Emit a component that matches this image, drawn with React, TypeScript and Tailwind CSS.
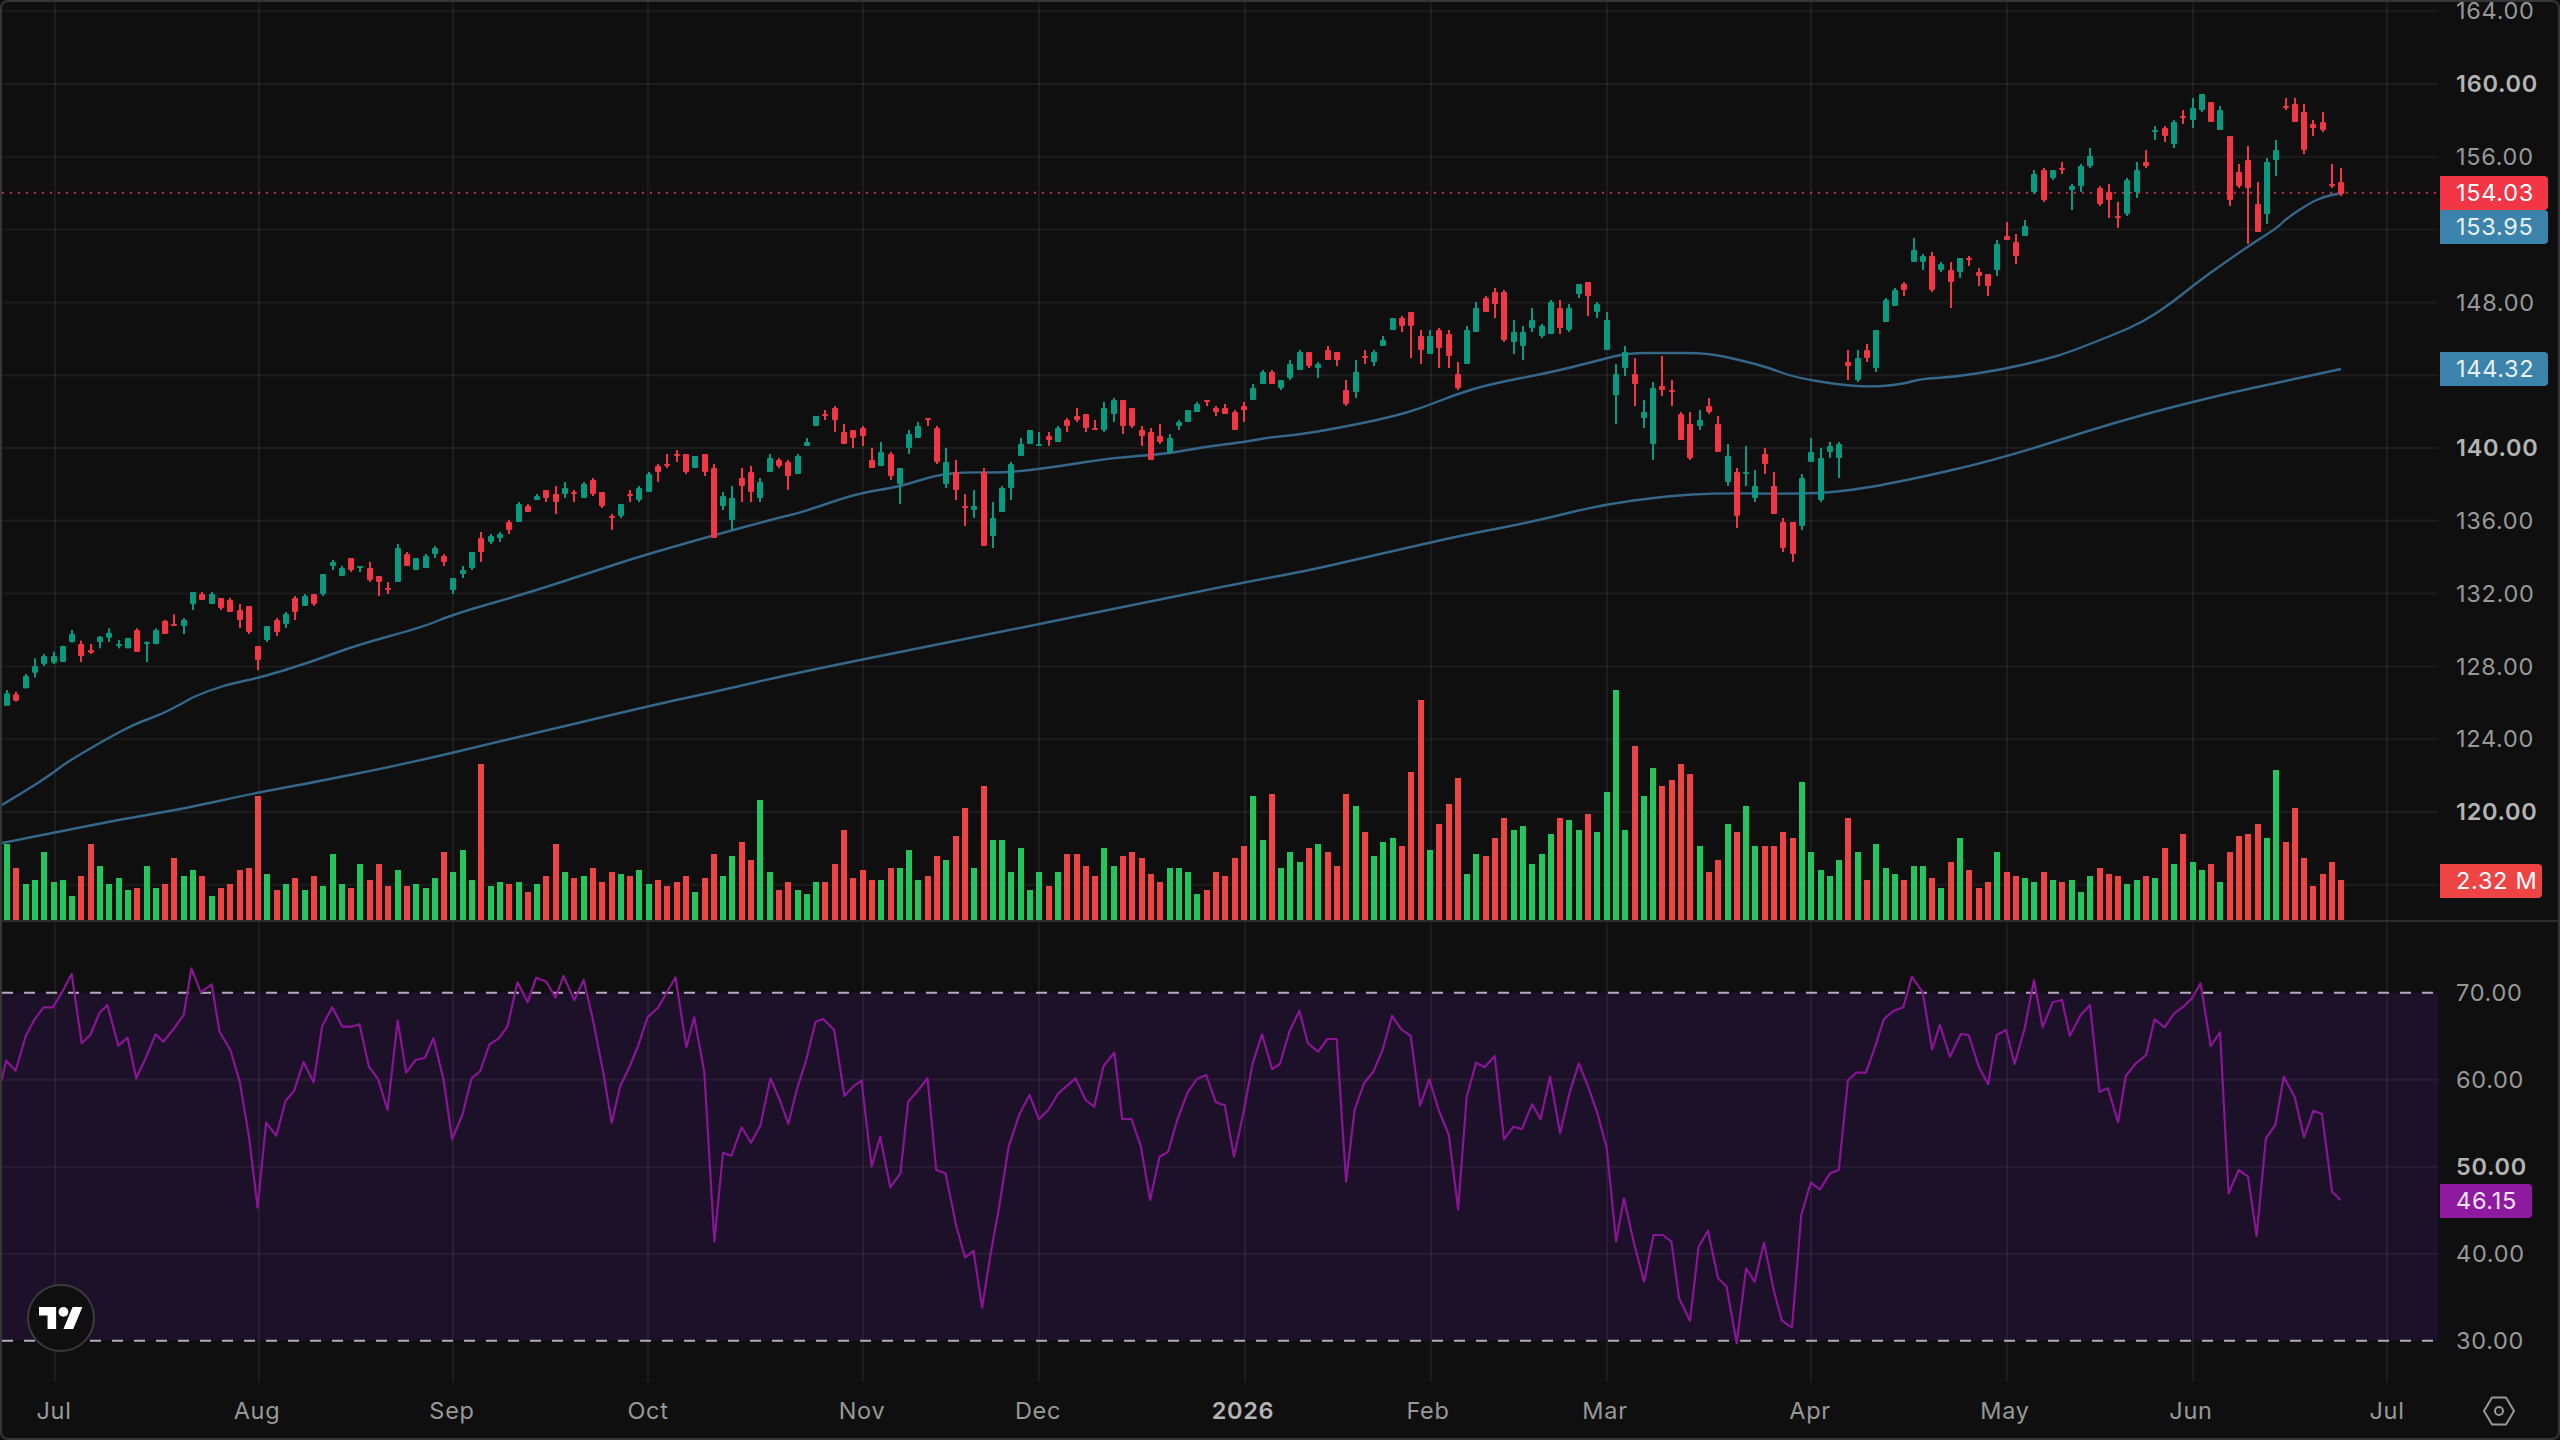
import React from "react";

type Bar = [number, number, number, number, number];

const segA: Bar[] = [
[1,930,940,977,977],[0,935,943,962,965],[1,882,888,925,925],[1,835,858,878,893],[1,822,828,852,858],[1,815,828,848,852],[1,797,798,846,846],[1,750,762,786,788],[0,782,792,828,846],[0,792,810,818,822],
[1,768,770,786,805],[1,745,758,773,786],[1,780,792,798,805],[1,774,774,805,805],[0,745,750,816,816],[1,784,786,792,846],[1,745,750,792,793],[0,720,722,762,762],[0,703,732,738,738],[1,714,720,738,762],
[1,636,636,672,690],[0,636,642,660,660],[1,636,642,672,672],[0,654,654,684,690],[0,654,660,696,696],[0,672,690,720,744],[0,678,678,756,762],[0,798,798,840,870],[1,738,738,780,786],[0,714,720,756,768],
[1,696,702,732,744],[0,648,654,696,720],[1,642,648,678,678],[0,642,642,672,678],[1,582,582,642,648],[1,540,546,558,570],[1,558,564,588,588],[0,534,534,570,576],[1,558,558,564,576],[0,546,564,600,606],
[0,588,588,606,648],[0,606,624,630,642],[1,492,504,606,606],[0,516,522,558,558],[1,534,534,570,570],[1,522,528,564,564],[1,498,504,522,534],[0,522,528,546,558],[1,594,594,630,642],[1,558,570,582,594],
[1,516,516,564,570],[0,456,474,516,546],[1,462,468,486,492],[1,456,462,474,486],[0,420,426,450,462],[1,366,372,426,426],[0,372,378,396,396],[1,342,348,360,360],[0,330,330,354,366],[0,318,342,366,402],
[1,306,324,342,354],[0,330,336,342,366],[1,306,312,354,354],[0,294,300,342,348],[0,336,336,378,384],[0,402,408,414,450],[1,372,372,408,414],[0,330,342,348,366],[1,318,324,360,366],[1,276,282,336,336],
[0,252,258,276,306],[0,222,252,258,264],[0,210,222,228,246],[0,222,222,276,282],[1,228,228,264,264],[0,222,222,276,288],[0,252,264,474,474],[1,336,348,378,390],[1,318,354,420,450],[0,264,294,318,366],
[0,258,276,336,366],[1,294,306,354,366],[1,222,234,276,276],[0,234,240,258,264],[0,240,246,288,330],[1,222,228,282,282],
];
const segB: Bar[] = [
[1,534,546,558,558],[1,468,468,498,498],[0,450,462,468,480],[0,438,444,480,516],[0,492,516,552,552],[0,510,510,534,564],[0,498,504,528,558],[0,564,600,624,624],[1,546,576,618,618],[0,576,582,648,660],
[1,624,624,672,732],[1,510,522,564,582],[1,486,498,534,534],[0,474,474,480,498],[0,498,504,606,612],[1,564,606,672,684],[0,600,636,690,720],[0,702,738,744,798],[1,690,738,750,774],[0,624,636,858,858],
[1,726,774,828,864],[1,678,684,756,756],[1,606,612,684,720],[1,534,552,588,588],[1,510,510,552,552],[1,516,552,558,558],[0,516,528,540,558],[1,498,504,546,546],[0,474,480,498,516],[0,444,468,480,486],
[0,462,462,504,516],[0,480,504,510,510],[1,426,444,510,516],[1,414,420,462,486],[0,420,420,498,522],[0,444,444,498,504],[0,498,510,528,558],[0,504,516,600,600],[0,492,528,546,552],[1,522,534,576,582],
[1,480,486,498,510],[1,450,450,486,486],[1,426,432,456,456],[0,420,420,426,438],[0,438,444,456,468],[0,432,444,462,462],[0,450,456,510,510],[0,426,438,450,486],[1,372,384,420,420],[1,330,336,372,372],
[0,330,336,372,372],[1,360,360,384,390],[1,300,312,354,360],[1,270,276,330,330],[0,276,276,318,324],[1,306,312,324,354],[0,258,270,300,300],[0,276,276,300,318],[0,360,390,432,438],[1,300,336,396,414],
[0,270,288,294,312],[1,270,276,306,318],[1,228,240,258,258],[1,174,174,210,210],[0,168,174,198,216],[0,156,156,198,294],[0,210,228,270,312],[1,210,228,282,282],[0,204,210,264,324],[0,210,222,288,324],
[0,306,342,384,390],[1,198,210,312,312],[1,126,144,216,216],[0,108,114,156,156],[0,84,96,132,174],[0,90,96,240,246],[1,180,216,246,282],[1,198,216,258,300],[1,144,180,204,216],[1,192,198,228,234],
[1,120,126,222,222],[0,120,144,204,222],[1,132,144,210,216],[1,72,72,102,114],[0,66,66,108,168],[1,126,132,156,174],[1,156,180,270,270],
];
const segC: Bar[] = [
[1,492,522,586,672],[1,438,456,504,528],[0,474,522,552,618],[1,600,636,654,684],[1,546,564,732,780],[0,468,558,570,588],[0,540,570,576,618],[0,636,642,720,720],[0,636,672,774,780],[1,630,660,678,690],
[0,594,618,636,642],[0,648,672,756,756],[1,732,768,846,858],[0,804,816,948,984],[1,738,816,822,858],[1,810,858,894,906],[0,744,762,792,822],[0,816,858,942,942],[0,954,966,1044,1056],[0,966,966,1062,1086],
[1,822,834,978,990],[1,714,756,786,786],[1,744,774,900,906],[1,726,738,756,774],[1,726,732,774,834],[0,450,486,498,540],[1,450,474,540,546],[0,432,450,474,486],[1,390,390,504,516],[1,294,300,366,366],
[1,264,270,318,318],[0,246,252,270,288],[1,114,150,186,186],[1,162,168,186,210],[0,156,168,270,276],[1,186,192,210,216],[0,186,210,246,324],[1,174,174,216,234],[0,168,174,180,198],[0,204,216,228,258],
[0,222,222,258,288],[1,120,132,210,228],
];
const segD: Bar[] = [
[0,486,528,540,540],[0,522,546,588,612],[1,480,498,528,528],[1,330,342,396,402],[0,324,330,420,426],[1,330,330,354,360],[0,306,324,330,342],[1,372,378,390,450],[1,312,318,378,396],[1,264,288,318,324],
[0,378,384,432,438],[0,372,396,420,474],[0,426,468,474,504],[1,354,360,462,468],[1,306,330,396,414],[0,270,306,318,324],[1,198,210,216,240],[0,198,204,228,246],[1,180,186,252,264],[0,150,168,174,192],
[1,114,144,180,204],[1,102,102,150,156],[0,126,126,186,186],[1,138,150,210,210],[0,228,228,420,438],[0,312,336,378,384],[0,258,300,384,552],[0,366,432,516,516],[1,294,306,462,492],[1,240,270,300,348],
[0,114,138,144,150],[0,114,132,186,186],[0,132,156,270,282],[0,180,192,204,228],[0,156,186,210,216],[0,312,372,378,384],[0,324,366,402,408],
];

const toPx = (seg: Bar[], origin: number) =>
  seg.map(([c, a, b, d, e]) => ({
    up: c === 1,
    wt: origin + a / 3,
    bt: origin + b / 3,
    bb: origin + d / 3,
    wb: origin + e / 3,
  }));

const candles = [...toPx(segA, 380), ...toPx(segB, 260), ...toPx(segC, 200), ...toPx(segD, 60)];

const volumeTops = [
492,564,612,600,516,606,600,648,588,492,558,612,594,630,624,558,624,612,534,588,570,588,648,624,612,570,564,348,582,630,612,594,630,588,618,522,612,624,552,600,552,618,570,
618,612,624,594,516,576,510,600,252,618,606,612,606,636,612,588,492,576,594,588,564,606,576,582,588,570,612,600,618,606,588,636,594,522,588,528,486,540,360,576,630,606,630,642,606,606,552,450,594,570,600,600,564,564,510,600,588,528,540,468,384,564,318,480,480,576,504,630,576,618,576,522,522,558,588,504,558,528,516,534,582,606,564,564,576,642,630,576,588,534,498,348,480,342,564,516,546,504,492,516,558,342,378,456,528,486,474,498,276,60,510,432,372,294,582,522,528,474,414,450,438,552,522,462,414,420,450,402,456,336,30,450,198,348,264,318,300,252,282,498,576,540,432,456,378,498,498,498,456,474,306,516,570,588,540,414,516,600,492,564,582,600,558,558,594,624,546,474,570,624,606,516,576,588,594,606,576,600,606,600,636,588,564,582,588,612,600,588,594,504,552,462,546,570,552,606,516,468,462,432,474,270,486,384,534,618,582,546,600,
];

const ma50 = "2,805 27,790 53,773 67,762 110,737 137,723 160,715 183,703 193,697 224,685 259,678 311,662 357,645 423,627 454,614 531,592 592,572 638,557 704,538 781,517 800,513 858,493 899,487 936,475 967,472 1004,473 1056,467 1109,458 1166,454 1203,447 1245,442 1271,437 1297,435 1344,427 1391,417 1422,408 1454,395 1490,384 1553,372 1600,360 1627,353 1667,353 1707,353 1740,360 1770,368 1793,377 1840,385 1873,387 1903,384 1920,379 1953,377 2000,370 2043,360 2067,353 2113,335 2143,322 2173,302 2200,280 2250,245 2277,228 2287,218 2310,203 2323,197 2341,193";
const ma200 = "2,843 53,833 117,820 183,809 250,794 310,783 400,765 490,744 653,705 714,692 800,672 980,636 1143,603 1241,583 1306,571 1354,560 1428,543 1469,534 1532,522 1600,505 1667,496 1717,493 1793,494 1840,492 1900,482 2000,459 2122,420 2220,395 2290,380 2341,369";

const smooth = (s: string) => {
  const p = s.split(" ").map((q) => q.split(",").map(Number));
  let d = `M${p[0][0]} ${p[0][1]}`;
  for (let i = 1; i < p.length - 1; i++) {
    const mx = (p[i][0] + p[i + 1][0]) / 2;
    const my = (p[i][1] + p[i + 1][1]) / 2;
    d += `Q${p[i][0]} ${p[i][1]} ${mx} ${my}`;
  }
  const e = p[p.length - 1];
  return `${d}L${e[0]} ${e[1]}`;
};

const rsiA = [0,380,8,302,20,332,33,228,44,180,56,142,68,142,80,95,92,42,105,250,116,225,128,158,138,135,152,257,164,233,175,355,188,290,200,223,210,245,222,210,236,165,246,25,258,97,272,73,282,215,296,270,308,365,320,530,331,743,342,488,355,527,367,422,378,392,390,306,403,367,414,198,427,142,440,200,452,200,462,193,474,320,486,358,498,450,511,182,522,338,534,300,546,293,557,235,570,360,581,538,594,465,606,355,617,333,629,253,641,235,652,200,665,67,678,127,689,53,702,65,714,113,724,48,738,120,750,60,762,180,775,335,786,488,797,378,809,320,820,258,832,172,846,142,857,97,868,52,882,262,892,172,905,335,918,845,929,578,940,587,953,502,965,548,977,497,990,355,1002,420,1013,492,1024,388,1036,300,1048,185,1058,177,1072,210,1085,408,1096,380,1107,362,1120,620,1131,530,1144,682,1157,640,1167,425,1180,390,1192,355,1203,630,1215,640,1229,800,1240,892,1251,873,1262,1043,1273,880,1284,740,1296,560,1310,462,1323,405,1335,478,1347,450,1360,400,1382,355,1395,420,1406,440,1418,318,1432,278,1442,477,1454,477,1466,560,1478,720,1490,590,1501,575,1513,478,1526,398,1538,357,1550,345,1562,425,1568,432];
const rsiB = [6,435,18,590,30,460,42,310,54,223,67,327,77,312,89,215,102,152,113,250,126,275,138,237,150,237,162,665,173,450,185,370,197,335,209,270,221,167,233,208,245,228,257,437,269,358,281,450,294,525,306,748,317,410,329,308,340,322,353,288,365,538,377,500,388,507,401,433,412,478,424,350,437,520,449,400,461,310,473,380,485,460,497,565,509,845,519,715,532,850,545,965,557,825,569,825,580,845,590,1015,604,1082,615,860,627,812,640,955,651,980,664,1150,676,925,687,965,699,848,712,995,722,1082,735,1103,747,765,759,668,771,688,784,640,795,630,807,360,818,338,830,338,841,265,853,178,866,152,878,142,889,50,903,97,915,268,925,195,938,290,952,222,962,225,975,320,987,372,998,225,1010,210,1021,312,1034,205,1046,60,1057,202,1070,127,1082,120,1092,228,1106,165,1118,135,1130,395,1141,385,1154,487,1164,348,1177,310,1190,285,1201,178,1214,202,1226,160,1238,140,1249,115,1260,70,1273,258,1285,217,1296,700,1309,630,1321,650,1332,828,1344,535,1356,495,1367,350,1381,412,1393,532,1405,452,1416,462,1429,695,1440,720];

const pts: string[] = [];
for (let k = 0; k < rsiA.length; k += 2) pts.push(`${(rsiA[k] / 1.285).toFixed(1)},${(960 + rsiA[k + 1] / 3).toFixed(1)}`);
for (let k = 0; k < rsiB.length; k += 2) pts.push(`${(1220 + rsiB[k] / 1.285).toFixed(1)},${(960 + rsiB[k + 1] / 3).toFixed(1)}`);
const rsiPoints = pts.join(" ");

const barX = (i: number) => Math.round(7 + 9.3 * i);
const priceY = (p: number) => 84 + (160 - p) * 18.2;

const gridX = [55, 259, 453, 648, 863, 1039, 1245, 1431, 1607, 1811, 2007, 2193, 2387];
const timeLabels: [string, number, boolean][] = [
  ["Jul", 54, false],
  ["Aug", 257, false],
  ["Sep", 452, false],
  ["Oct", 648, false],
  ["Nov", 862, false],
  ["Dec", 1038, false],
  ["2026", 1243, true],
  ["Feb", 1428, false],
  ["Mar", 1605, false],
  ["Apr", 1810, false],
  ["May", 2005, false],
  ["Jun", 2191, false],
  ["Jul", 2387, false],
];

const mainPrices: [string, boolean][] = [
  ["164.00", false],
  ["160.00", true],
  ["156.00", false],
  ["", false],
  ["148.00", false],
  ["", false],
  ["140.00", true],
  ["136.00", false],
  ["132.00", false],
  ["128.00", false],
  ["124.00", false],
  ["120.00", true],
];
const rsiPrices: [string, boolean][] = [
  ["70.00", false],
  ["60.00", false],
  ["50.00", true],
  ["40.00", false],
  ["30.00", false],
];

const priceLines = Array.from({ length: 13 }, (_, k) => priceY(164 - k * 4));

function AxisLabel({ text, bold, row }: { text: string; bold: boolean; row: string }) {
  return (
    <div className={`${row} flex items-center pl-[18px] text-[23.5px] tracking-[0.03em] ${bold ? "font-semibold text-[#b4b4b4]" : "text-[#989898]"}`}>
      {text}
    </div>
  );
}

function Badge({ className, text }: { className: string; text: string }) {
  return (
    <div className={`absolute left-[2px] h-[34px] flex items-center pl-[16px] rounded-r-[4px] text-[23.5px] tracking-[0.03em] ${className}`}>
      {text}
    </div>
  );
}

export default function App() {
  return (
    <div className="w-[2560px] h-[1440px] bg-[#0f0f0f]">
      <div
        className="w-[2560px] h-[1440px] bg-[#0f0f0f] border-2 border-[#363636] rounded-[8px] overflow-hidden flex flex-col"
        style={{ fontFamily: "Inter, 'Liberation Sans', sans-serif" }}
      >
        <div className="flex h-[918px] shrink-0">
          <svg width={2436} height={918} viewBox="2 2 2436 918" className="block shrink-0">
            {priceLines.map((y) => (
              <line key={y} x1={2} x2={2438} y1={y} y2={y} stroke="#fff" strokeOpacity={0.055} strokeWidth={2} />
            ))}
            {gridX.map((x) => (
              <line key={x} x1={x} x2={x} y1={2} y2={920} stroke="#fff" strokeOpacity={0.055} strokeWidth={2} />
            ))}
            {volumeTops.map((t, i) => (
              <rect
                key={i}
                x={barX(i) - 3}
                y={680 + t / 3}
                width={6}
                height={920 - (680 + t / 3)}
                fill={candles[i].up ? "#22c55e" : "#ef4444"}
              />
            ))}
            <path d={smooth(ma50)} fill="none" stroke="#35678a" strokeWidth={2.4} strokeLinejoin="round" />
            <path d={smooth(ma200)} fill="none" stroke="#35678a" strokeWidth={2.4} strokeLinejoin="round" />
            <line x1={2} x2={2438} y1={192.7} y2={192.7} stroke="#f23645" strokeOpacity={0.85} strokeWidth={2} strokeDasharray="2 6" />
            {candles.map((c, i) => {
              const cx = barX(i);
              const color = c.up ? "#089981" : "#f23645";
              return (
                <g key={i} fill={color}>
                  <rect x={cx - 1} y={c.wt} width={2} height={c.wb - c.wt} />
                  <rect x={cx - 3} y={c.bt} width={6} height={Math.max(c.bb - c.bt, 2)} rx={1} />
                </g>
              );
            })}
          </svg>
          <div className="relative flex-1 overflow-hidden">
            <div className="-mt-[27.4px]">
              {mainPrices.map(([t, b], i) => (
                <AxisLabel key={i} text={t} bold={b} row="h-[72.8px]" />
              ))}
            </div>
            <Badge className="top-[174px] w-[108px] bg-[#f23645] text-[#fff]" text="154.03" />
            <Badge className="top-[208px] w-[108px] bg-[#3c83ab] text-[#e6f0f6]" text="153.95" />
            <Badge className="top-[350px] w-[108px] bg-[#3c83ab] text-[#e6f0f6]" text="144.32" />
            <Badge className="top-[862px] w-[102px] bg-[#ef4444] text-[#fff]" text="2.32 M" />
          </div>
        </div>

        <div className="h-[2px] shrink-0 bg-[#2c2c2c]" />

        <div className="relative flex h-[460px] shrink-0">
          <svg width={2436} height={460} viewBox="2 922 2436 460" className="block shrink-0">
            <rect x={2} y={992.7} width={2436} height={348} fill="#1d1029" />
            {[1079.7, 1166.8, 1253.8].map((y) => (
              <line key={y} x1={2} x2={2438} y1={y} y2={y} stroke="#fff" strokeOpacity={0.055} strokeWidth={2} />
            ))}
            {gridX.map((x) => (
              <line key={x} x1={x} x2={x} y1={922} y2={1382} stroke="#fff" strokeOpacity={0.055} strokeWidth={2} />
            ))}
            {[992.7, 1340.7].map((y) => (
              <line key={y} x1={2} x2={2434} y1={y} y2={y} stroke="#b5a9be" strokeWidth={2} strokeDasharray="11 11" />
            ))}
            <polyline points={rsiPoints} fill="none" stroke="#8a1596" strokeWidth={2.2} strokeLinejoin="round" />
          </svg>
          <div className="relative flex-1 overflow-hidden">
            <div className="mt-[27px]">
              {rsiPrices.map(([t, b], i) => (
                <AxisLabel key={i} text={t} bold={b} row="h-[87.1px]" />
              ))}
            </div>
            <Badge className="top-[262px] w-[92px] bg-[#8e1a9f] text-[#f0e0f3]" text="46.15" />
          </div>
          <div className="absolute left-[25px] top-[362px] w-[68px] h-[68px] rounded-full bg-[#0f0f0f] border-2 border-[#3b3b3b] flex items-center justify-center">
            <svg width={44} height={22} viewBox="0 4 36 18" fill="#fff">
              <path d="M14 22H7V11H0V4h14v18zM28 22h-8l7.5-18h8L28 22z" />
              <circle cx={20} cy={8} r={4} />
            </svg>
          </div>
        </div>

        <div className="flex h-[56px] shrink-0 items-center pt-[2px] text-[23.5px] tracking-[0.03em]">
          {timeLabels.map(([t, x, b], i) => (
            <div
              key={i}
              className={`w-0 flex justify-center whitespace-nowrap ${b ? "font-semibold text-[#b4b4b4]" : "text-[#989898]"}`}
              style={{ marginLeft: i === 0 ? x - 2 : x - timeLabels[i - 1][1] }}
            >
              {t}
            </div>
          ))}
          <svg width={32} height={30} viewBox="0 0 32 30" fill="none" stroke="#989898" strokeWidth={2} className="ml-[96px] shrink-0">
            <path d="M9 1.5h14L31 15l-8 13.5H9L1 15z" strokeLinejoin="round" />
            <circle cx={16} cy={15} r={4} />
          </svg>
        </div>
      </div>
    </div>
  );
}
